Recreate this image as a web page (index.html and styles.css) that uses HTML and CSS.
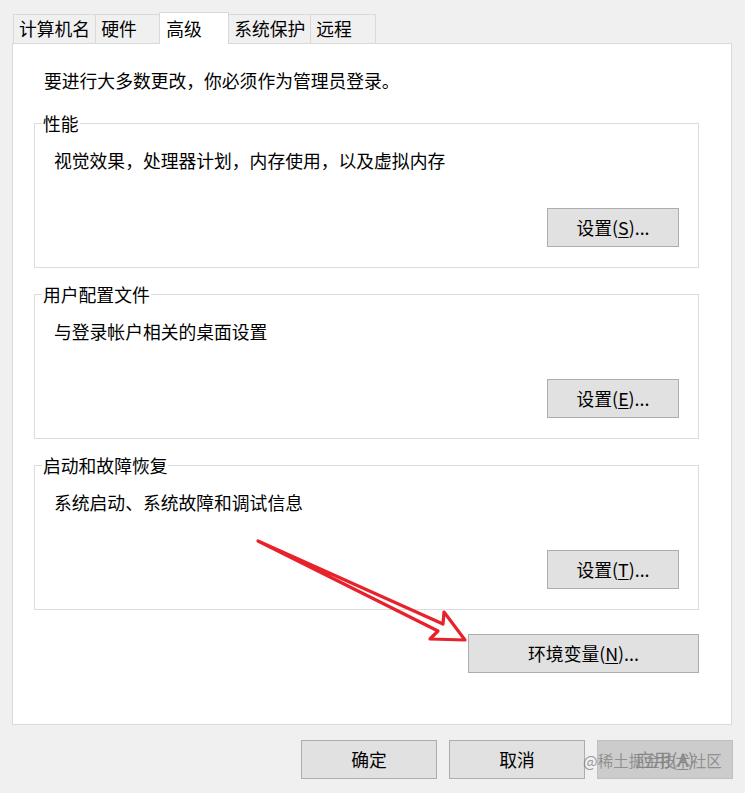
FILE: index.html
```html
<!DOCTYPE html>
<html lang="zh-CN">
<head>
<meta charset="utf-8">
<title>系统属性 - 高级</title>
<link rel="stylesheet" href="styles.css">
</head>
<body>
<div class="dialog">
  <div class="tabs">
    <div class="tab">计算机名</div>
    <div class="tab tab-short">硬件</div>
    <div class="tab tab-active">高级</div>
    <div class="tab">系统保护</div>
    <div class="tab tab-short">远程</div>
  </div>
  <div class="panel">
    <p class="notice">要进行大多数更改，你必须作为管理员登录。</p>
    <fieldset class="group">
      <legend>性能</legend>
      <p class="desc">视觉效果，处理器计划，内存使用，以及虚拟内存</p>
      <div class="group-actions"><button class="btn btn-setting">设置(<u>S</u>)...</button></div>
    </fieldset>
    <fieldset class="group">
      <legend>用户配置文件</legend>
      <p class="desc">与登录帐户相关的桌面设置</p>
      <div class="group-actions"><button class="btn btn-setting">设置(<u>E</u>)...</button></div>
    </fieldset>
    <fieldset class="group">
      <legend>启动和故障恢复</legend>
      <p class="desc">系统启动、系统故障和调试信息</p>
      <div class="group-actions"><button class="btn btn-setting">设置(<u>T</u>)...</button></div>
    </fieldset>
    <div class="env-row"><button class="btn btn-env">环境变量(<u>N</u>)...</button></div>
  </div>
  <div class="footer">
    <button class="btn btn-foot">确定</button>
    <button class="btn btn-foot">取消</button>
    <button class="btn btn-foot btn-disabled">应用(<u>A</u>)</button>
  </div>
  <div class="watermark">@稀土掘金技术社区</div>
  <svg class="arrow" width="745" height="793" viewBox="0 0 745 793" aria-hidden="true">
    <polygon points="258,541 443,624 444,612 465,640 430,639 438,631" fill="none" stroke="#e8222b" stroke-width="3.2" stroke-linejoin="round"/>
  </svg>
</div>
</body>
</html>
```
FILE: styles.css
```css
html, body {
  margin: 0;
  padding: 0;
  background: #f0f0f0;
}
body {
  font-family: "Noto Sans CJK SC", "Noto Sans", sans-serif;
  font-size: 17.8px;
  color: #000;
}
.dialog {
  position: relative;
  width: 745px;
  height: 793px;
  padding-top: 14px;
  box-sizing: border-box;
  overflow: hidden;
}
.tabs {
  display: flex;
  align-items: flex-start;
  height: 29px;
  margin-left: 13px;
}
.tab {
  box-sizing: border-box;
  height: 29px;
  line-height: 27px;
  padding: 0 5px;
  border: 1px solid #d9d9d9;
  border-bottom: none;
  margin-right: -1px;
  background: #f0f0f0;
  white-space: nowrap;
}
.tab-short {
  min-width: 66px;
}
.tab-active {
  position: relative;
  z-index: 1;
  background: #fff;
  height: 32px;
  margin-top: -2px;
  margin-left: -1px;
  padding: 2px 5px 0 6px;
  min-width: 70px;
}
.panel {
  box-sizing: border-box;
  margin-left: 12px;
  width: 720px;
  height: 682px;
  background: #fff;
  border: 1px solid #d9d9d9;
  padding: 24px 32px 0 21px;
}
.notice {
  margin: 0 0 19px 10px;
  line-height: 24px;
}
.group {
  margin: 0 0 14px 0;
  padding: 0 19px 20px 7px;
  border: 1px solid #dcdcdc;
  min-width: 0;
}
.group legend {
  padding: 0 1px;
  line-height: 24px;
}
.desc {
  margin: 13px 0 0 12px;
  line-height: 24px;
}
.group-actions {
  display: flex;
  justify-content: flex-end;
  margin-top: 36px;
}
.btn {
  font-family: inherit;
  font-size: 17.8px;
  color: #000;
  background: #e1e1e1;
  border: 1px solid #adadad;
  border-radius: 0;
  height: 39px;
  padding: 0;
  box-sizing: border-box;
  line-height: 37px;
}
.btn u {
  text-underline-offset: 2px;
}
.btn-setting {
  width: 132px;
}
.env-row {
  display: flex;
  justify-content: flex-end;
  margin-top: 24px;
}
.btn-env {
  width: 231px;
}
.footer {
  display: flex;
  justify-content: flex-end;
  gap: 12px;
  margin-top: 15px;
  padding-right: 12px;
}
.btn-foot {
  width: 136px;
}
.btn-disabled {
  background: #cccccc;
  border-color: #bfbfbf;
  color: #8a8a8a;
}
.watermark {
  position: absolute;
  left: 583px;
  top: 749px;
  font-size: 15.5px;
  line-height: 22px;
  color: rgba(128, 128, 128, 0.8);
  white-space: nowrap;
}
.arrow {
  position: absolute;
  left: 0;
  top: 0;
  pointer-events: none;
}
```
